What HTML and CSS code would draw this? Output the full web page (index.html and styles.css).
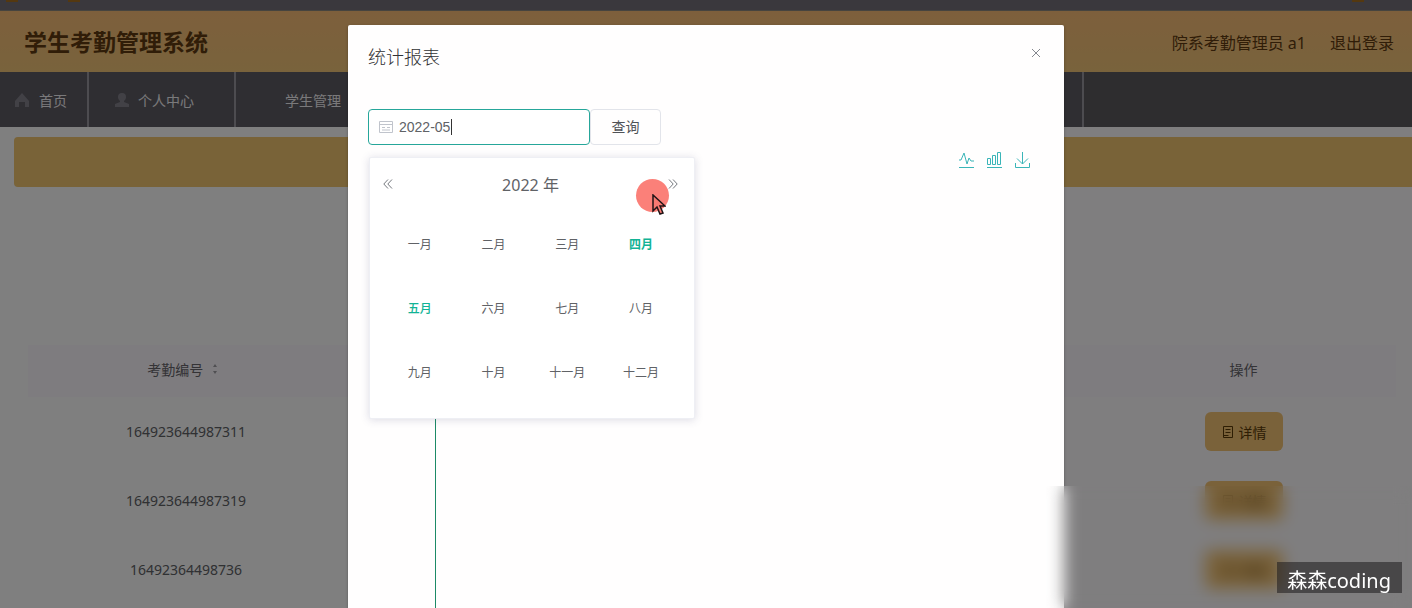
FILE: index.html
```html
<!DOCTYPE html>
<html lang="zh-CN">
<head>
<meta charset="utf-8">
<title>学生考勤管理系统</title>
<link rel="stylesheet" href="styles.css">
</head>
<body>
<div class="page">
  <div class="browser-bar"><i></i><i></i><i class="last"></i></div>
  <header class="top">
    <h1>学生考勤管理系统</h1>
    <div class="account"><span>院系考勤管理员 a1</span><a href="#">退出登录</a></div>
  </header>
  <nav class="nav">
    <a class="home" href="#"><svg width="16" height="16" viewBox="0 0 16 16"><path d="M8 1 1 9v6h4v-5h6v5h4V9z" fill="currentColor"/></svg>首页</a>
    <a class="person" href="#"><svg width="16" height="16" viewBox="0 0 16 16"><path d="M4 5a4 4 0 0 1 8 0c0 2-1 3-2 4v1l5 2v3H1v-3l5-2V9C5 8 4 7 4 5z" fill="currentColor"/></svg>个人中心</a>
    <a class="student" href="#">学生管理</a>
    <span class="rest"></span>
  </nav>
  <main class="content">
    <div class="banner"></div>
    <section class="card">
      <table class="records">
        <colgroup><col class="c-id"><col><col class="c-op"></colgroup>
        <thead><tr><th>考勤编号 <svg class="sort" width="8" height="12" viewBox="0 0 8 12"><path d="M4 1 6 4H2zM4 11 2 8h4z" fill="currentColor"/></svg></th><th></th><th>操作</th></tr></thead>
        <tbody>
          <tr><td>164923644987311</td><td></td><td><button class="detail"><svg width="14" height="14" viewBox="0 0 14 14" fill="none" stroke="currentColor"><path d="M2.500 1.500h9v11h-9zM4.500 4.500h5M4.500 7.500h5M2.500 10.500h5"/></svg>详情</button></td></tr>
          <tr><td>164923644987319</td><td></td><td><button class="detail"><svg width="14" height="14" viewBox="0 0 14 14" fill="none" stroke="currentColor"><path d="M2.500 1.500h9v11h-9zM4.500 4.500h5M4.500 7.500h5M2.500 10.500h5"/></svg>详情</button></td></tr>
          <tr><td>16492364498736</td><td></td><td><button class="detail"><svg width="14" height="14" viewBox="0 0 14 14" fill="none" stroke="currentColor"><path d="M2.500 1.500h9v11h-9zM4.500 4.500h5M4.500 7.500h5M2.500 10.500h5"/></svg>详情</button></td></tr>
        </tbody>
      </table>
    </section>
  </main>
</div>

<div class="mask">
  <section class="dialog" role="dialog" aria-labelledby="dlg-title">
    <div class="dialog-head">
      <h2 id="dlg-title">统计报表</h2>
      <button class="close" aria-label="关闭"><svg width="12" height="12" viewBox="0 0 12 12" fill="none" stroke="currentColor"><path d="m2 2 8 8M10 2l-8 8"/></svg></button>
    </div>
    <div class="query">
      <div class="date-box">
        <svg class="cal-icon" width="14" height="14" viewBox="0 0 14 14" fill="none" stroke="currentColor"><path d="M.5 1.500h13v11H.5zM.5 4.500h13M3 7.500h3M8 7.500h3M3 10h8"/></svg>
        <input type="text" value="2022-05" aria-label="月份">
        <span class="caret"></span>
        <div class="picker">
          <div class="picker-head">
            <button aria-label="前一年"><svg width="10" height="10" viewBox="0 0 10 10" fill="none" stroke="currentColor"><path d="M5 .5.800 5 5 9.500M9 .5 4.800 5 9 9.500"/></svg></button>
            <span>2022 年</span>
            <button aria-label="后一年"><svg width="10" height="10" viewBox="0 0 10 10" fill="none" stroke="currentColor"><path d="M5 .5 9.200 5 5 9.500M1 .5 5.200 5 1 9.500"/></svg></button>
          </div>
          <div class="months">
            <button>一月</button><button>二月</button><button>三月</button><button class="today">四月</button>
            <button class="current">五月</button><button>六月</button><button>七月</button><button>八月</button>
            <button>九月</button><button>十月</button><button>十一月</button><button>十二月</button>
          </div>
        </div>
      </div>
      <button class="search">查询</button>
    </div>
    <div class="chart">
      <div class="tools">
        <svg width="17" height="17" viewBox="0 0 17 17"><path d="M1 9h2l3-7 3 11 2-6 2 3h3M1 16.500h15"/></svg>
        <svg width="17" height="17" viewBox="0 0 17 17"><path d="M1.500 7.500h3v6h-3zM6.500 4.500h3v9h-3zM11.500 1.500h3v12h-3zM1 16.500h15"/></svg>
        <svg width="17" height="17" viewBox="0 0 17 17"><path d="M8.500 1v12M3 7.500l5.500 5.500L14 7.500M1.500 12v4.500h14V12"/></svg>
      </div>
      <div class="axis"></div>
    </div>
  </section>
</div>

<div class="soft-area"></div>
<div class="watermark">森森coding</div>
<div class="click-spot"><svg width="14" height="22" viewBox="0 0 14 22"><path d="M1 1v16l4-4 3 7 3-1-3-7h5z" fill="#f77972" stroke="#201416" stroke-width="1.500"/></svg></div>
</body>
</html>
```
FILE: styles.css
```css
* { box-sizing: border-box; }
body {
  margin: 0;
  height: 100vh;
  overflow: hidden;
  position: relative;
  font: 14px "Noto Sans", "Noto Sans CJK SC", sans-serif;
  color: #606266;
}
button { font: inherit; color: inherit; background: none; border: 0; padding: 0; }
a { color: inherit; text-decoration: none; }
h1, h2 { margin: 0; }
svg { display: block; flex: none; }

.page { min-height: 100vh; background: linear-gradient(90deg, #fefefe 30%, #fffcff 75%); }
.browser-bar {
  height: 11px;
  background: #74717a;
  display: flex;
  gap: 50px;
  padding: 0 48px 0 6px;
  border-bottom: 1px solid #8c887e;
}
.browser-bar i { width: 12px; height: 2px; background: #a87020; }
.browser-bar .last { margin-left: auto; }
.top {
  height: 61px;
  padding: 0 18px 0 24px;
  display: flex;
  align-items: center;
  justify-content: space-between;
  background: linear-gradient(#fbbf78, #f2c678);
  color: #603a10;
}
.top h1 { font-size: 23px; line-height: 32px; font-weight: 700; }
.account { display: flex; gap: 24px; font-size: 16px; }
.nav {
  display: flex;
  height: 55px;
  background: #5e5c64;
  color: #f4f2f6;
}
.nav a { display: flex; align-items: center; border-right: 2px solid #9a98a0; }
.nav svg { color: #85838d; }
.nav .home { width: 89px; padding-left: 14px; gap: 9px; }
.nav .person { width: 147px; padding-left: 25px; gap: 8px; }
.nav .student { flex: 1; padding-left: 49px; }
.nav .rest { width: 328px; background: #5d5b5f; }

.content { padding: 10px 0 0 14px; }
.banner { height: 50px; background: #f2c670; border-radius: 4px 0 0 4px; }
.card { margin: 0 16px 0 14px; padding-top: 158px; }
.records { width: 100%; table-layout: fixed; border-collapse: collapse; text-align: center; color: #606266; }
.records .c-id { width: 316px; }
.records .c-op { width: 305px; }
.records th { height: 52px; padding: 0 0 4px; font-weight: 400; color: #68666c; background: #fcf9fe; }
.records th:first-child { padding-right: 6px; }
.records th .sort { display: inline-block; margin-left: 4px; color: #a09ea4; }
.records td { height: 69px; padding: 0; }
.detail {
  display: inline-flex;
  align-items: center;
  justify-content: center;
  gap: 4px;
  width: 78px;
  height: 39px;
  border-radius: 6px;
  background: #f4c474;
  color: #5c3c08;
}

.mask {
  position: absolute;
  inset: 0;
  padding-top: 25px;
  display: flex;
  justify-content: center;
  background: rgba(0, 0, 0, 0.5);
}
.dialog {
  width: calc(50% + 10px);
  display: flex;
  flex-direction: column;
  background: #fffefe;
  border-radius: 2px 2px 0 0;
  box-shadow: 0 1px 3px rgba(0, 0, 0, 0.3);
}
.dialog-head { display: flex; justify-content: space-between; padding: 20px 22px 0 20px; }
.dialog-head h2 { font-size: 18px; line-height: 24px; font-weight: 300; color: #303133; }
.close { height: 16px; color: #85888f; }
.query { display: flex; padding: 40px 20px 0; }
.date-box { position: relative; width: 222px; }
.date-box input {
  width: 100%;
  height: 36px;
  padding: 0 12px 0 30px;
  border: 1px solid #26a69a;
  border-radius: 4px;
  background: #fff;
  font: 14px "Liberation Sans", sans-serif;
  color: #606266;
  outline: 0;
}
.cal-icon { position: absolute; left: 11px; top: 11px; color: #c0c4cc; }
.caret { position: absolute; left: 83px; top: 10px; width: 1px; height: 16px; background: #333; }
.search { width: 71px; height: 36px; border: 1px solid #e2e4ea; border-radius: 4px; color: #505256; line-height: 32px; }
.picker {
  position: absolute;
  top: 48px;
  left: 1px;
  width: 326px;
  padding: 14px 16px 14px 13px;
  background: #fff;
  border: 1px solid #eeeff4;
  border-radius: 2px;
  box-shadow: 0 1px 8px rgba(60, 60, 110, 0.18);
}
.picker-head { display: flex; justify-content: space-between; height: 40px; color: #606266; }
.picker-head span { font-size: 16px; line-height: 26px; }
.picker-head button { height: 23px; color: #74777d; }
.months { display: grid; grid-template-columns: repeat(4, 1fr); grid-auto-rows: 64px; font-size: 12px; }
.months .today { color: #12b395; font-weight: 700; }
.months .current { color: #12b395; font-weight: 500; }

.chart { flex: 1; display: flex; flex-direction: column; padding: 6px 33px 0 87px; }
.tools { display: flex; justify-content: flex-end; gap: 11px; }
.tools svg { fill: none; stroke: #3ab5b8; }
.axis { flex: 1; border-left: 1px solid #1d8a66; }

.soft-area {
  position: absolute;
  top: 486px;
  right: 0;
  bottom: 0;
  width: 366px;
  backdrop-filter: blur(8px);
}
.watermark {
  position: absolute;
  right: 10px;
  bottom: 15px;
  height: 31px;
  padding: 0 11px 0 10px;
  background: rgba(28, 26, 28, 0.55);
  color: #fff;
  font-size: 20px;
  line-height: 38px;
}
.click-spot {
  position: absolute;
  left: 636px;
  top: 179px;
  width: 33px;
  height: 33px;
  border-radius: 50%;
  background: #fb8079;
  padding: 15px 0 0 16px;
}
```
